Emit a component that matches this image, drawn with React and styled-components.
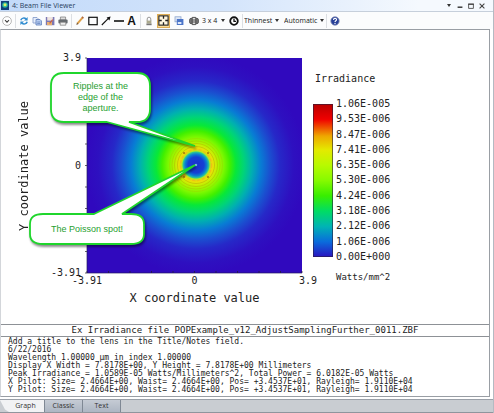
import React, { useState } from 'react';
import styled, { createGlobalStyle } from 'styled-components';

const GlobalStyle = createGlobalStyle`
  * {
    box-sizing: border-box;
  }
  body {
    margin: 0;
    background-color: #fff;
    font-family: 'Open Sans', 'Noto Sans', sans-serif;
    font-size: 7px;
    color: #222;
  }
  button, select {
    font: inherit;
    color: inherit;
    border: 0;
    padding: 0;
    background: none;
  }
`;

const mono = "'DejaVu Sans Mono', 'Liberation Mono', monospace";

const WindowStyles = styled.div`
  display: flex;
  flex-direction: column;
  min-height: 100vh;
  border-right: 1px solid #b4bac2;
`;

const TitleBar = styled.header`
  display: flex;
  align-items: center;
  height: 12px;
  padding: 0 6px 0 1px;
  gap: 3px;
  background: linear-gradient(to right, #c2dafa 0%, #d3e4fb 45%, #f5f9fe 85%);
  border-bottom: 1px solid #c6cfdb;
  h1 {
    flex: 1;
    margin: 0;
    font-size: 7px;
    line-height: 10px;
    font-weight: 400;
    color: #27405c;
  }
`;

const WindowButtons = styled.div`
  display: flex;
  button {
    display: flex;
    align-items: center;
    justify-content: center;
    width: 11px;
    height: 10px;
  }
`;

const Toolbar = styled.div`
  display: flex;
  align-items: center;
  height: 17px;
  background-color: #fbfcfd;
`;

const ToolGroup = styled.div`
  display: flex;
  align-items: center;
  gap: ${(props) => props.$gap || 0}px;
`;

const Separator = styled.span`
  width: 1px;
  height: 14px;
  margin: 0 1px 0 2px;
  background-color: #dcdfe3;
`;

const ToolButton = styled.button`
  display: flex;
  align-items: center;
  justify-content: center;
  width: 13px;
  height: 14px;
  background-color: ${(props) => (props.$active ? '#fbdc98' : 'transparent')};
  box-shadow: ${(props) => (props.$active ? 'inset 0 0 0 1px #dfae56' : 'none')};
`;

const TextTool = styled(ToolButton)`
  font-family: 'Liberation Sans', Arial, sans-serif;
  font-size: 12px;
  line-height: 14px;
  font-weight: 700;
  color: #111;
`;

const PickerStyles = styled.label`
  display: flex;
  align-items: center;
  width: ${(props) => props.$width}px;
  select {
    appearance: none;
    flex: 1;
    min-width: 0;
    line-height: 12px;
    outline: none;
  }
`;

const Canvas = styled.main`
  flex: 1;
  display: flex;
  flex-direction: column;
  margin-right: 3px;
  background-color: #fff;
  border: 1px solid #999ea4;
  border-left-color: #d3d6da;
`;

const Chart = styled.section`
  flex: 1;
  display: grid;
  grid-template-columns: 14px 56px minmax(0, 215px) auto;
  grid-template-rows: auto 16px 18px;
  align-content: start;
  justify-content: start;
  padding: 28px 16px 15px;
  font-family: ${mono};
  font-size: 10px;
  line-height: 12px;
`;

const YLabel = styled.div`
  writing-mode: vertical-rl;
  transform: rotate(180deg);
  text-align: center;
  font-size: 12px;
  line-height: 14px;
`;

const YTicks = styled.div`
  display: flex;
  flex-direction: column;
  justify-content: space-between;
  margin: -6px 0;
  padding-right: 6px;
  text-align: right;
`;

const XTicks = styled.div`
  grid-column: 3;
  display: grid;
  grid-template-columns: 1fr 1fr 1fr;
  margin: 0 -15px;
  line-height: 16px;
  text-align: center;
  span:first-child {
    text-align: left;
  }
  span:last-child {
    text-align: right;
  }
`;

const XLabel = styled.div`
  grid-column: 3;
  font-size: 12px;
  line-height: 18px;
  text-align: center;
  white-space: nowrap;
`;

const MapBox = styled.div`
  position: relative;
  aspect-ratio: 1;
  > svg {
    display: block;
    width: 100%;
    height: 100%;
    overflow: visible;
  }
`;

const CalloutStyles = styled.div`
  position: absolute;
  left: ${(props) => props.$left}px;
  top: ${(props) => props.$top}px;
  width: ${(props) => props.$width}px;
  height: ${(props) => props.$height}px;
  display: flex;
  align-items: center;
  justify-content: center;
  svg {
    position: absolute;
    left: 0;
    top: 0;
    width: 100%;
    height: 100%;
    overflow: visible;
    filter: drop-shadow(1px 2px 1px rgba(0, 0, 0, 0.45));
  }
  p {
    position: relative;
    margin: 0;
    font-family: 'Liberation Sans', Arial, sans-serif;
    font-size: 9px;
    line-height: 11px;
    text-align: center;
    color: #27a030;
  }
`;

const Legend = styled.div`
  grid-column: 4;
  grid-row: 1 / 4;
  margin-left: 11px;
  padding-top: 15px;
  h2 {
    margin: 0 0 13px 2px;
    font-size: 10px;
    line-height: 12px;
    font-weight: 400;
  }
  p {
    margin: 8px 0 0 23px;
    font-size: 9px;
    line-height: 12px;
  }
`;

const Scale = styled.div`
  display: flex;
  align-items: stretch;
  gap: 3px;
  height: 165px;
`;

const ColorBar = styled.div`
  width: 20px;
  margin: 6px 0;
  border: 1px solid rgba(40, 30, 60, 0.6);
  background: linear-gradient(
      to top,
      #2a14c0 0%,
      #0a6cdc 10%,
      #00b4b4 20%,
      #00dc64 30%,
      #38ee00 40%,
      #86fa00 50%,
      #b8fa00 60%,
      #e4ea00 70%,
      #eea800 79%,
      #f00000 90%,
      #b80000 100%
    )
    border-box;
`;

const ScaleLabels = styled.ul`
  display: flex;
  flex-direction: column;
  justify-content: space-between;
  margin: 0;
  padding: 0;
  list-style: none;
`;

const Caption = styled.div`
  border: solid #8d9196;
  border-width: 1px 0;
  font-family: ${mono};
  font-size: 9px;
  line-height: 11px;
  text-align: center;
`;

const Notes = styled.div`
  padding: 1px 7px 2px;
  font-family: ${mono};
  font-size: 8px;
  line-height: 8px;
  white-space: nowrap;
  p {
    margin: 0;
  }
`;

const TabBar = styled.div`
  display: flex;
  height: 14px;
  margin-top: 2px;
  background-color: #c9cdd2;
  border-top: 1px solid #9aa0a8;
  border-bottom: 1px solid #8f959d;
`;

const Tab = styled.button`
  width: 38px;
  color: #333;
  line-height: 12px;
  background: linear-gradient(#c5cbd4, #adb6c3);
  border-right: 1px solid #7f8894;
  &[aria-selected='true'] {
    width: 45px;
    padding-left: 7px;
    background: #f1f2f4;
    clip-path: polygon(0 0, 100% 0, 100% 100%, 9px 100%, 5px 80%);
  }
`;

const scaleValues = [
  '1.06E-005',
  '9.53E-006',
  '8.47E-006',
  '7.41E-006',
  '6.35E-006',
  '5.30E-006',
  '4.24E-006',
  '3.18E-006',
  '2.12E-006',
  '1.06E-006',
  '0.00E+000',
];

const notes = [
  'Add a title to the lens in the Title/Notes field.',
  '6/22/2016',
  'Wavelength 1.00000 µm in index 1.00000',
  'Display X Width = 7.8178E+00, Y Height = 7.8178E+00 Millimeters',
  'Peak Irradiance = 1.0589E-05 Watts/Millimeters^2, Total Power = 6.0182E-05 Watts',
  'X Pilot: Size= 2.4664E+00, Waist= 2.4664E+00, Pos= +3.4537E+01, Rayleigh= 1.9110E+04',
  'Y Pilot: Size= 2.4664E+00, Waist= 2.4664E+00, Pos= +3.4537E+01, Rayleigh= 1.9110E+04',
];

// radius in plot pixels, colour
const beamStops = [
  [0, '#2f6fe0'],
  [2, '#1a34cc'],
  [8, '#1440d4'],
  [11, '#0a84d0'],
  [13, '#30c890'],
  [14, '#b4e820'],
  [16, '#f0d808'],
  [18, '#e0e808'],
  [22, '#b0f400'],
  [28, '#7cf800'],
  [34, '#40f000'],
  [40, '#08e838'],
  [48, '#00d478'],
  [56, '#00b0b0'],
  [65, '#087cd4'],
  [74, '#1a50d0'],
  [84, '#2628c8'],
  [98, '#2e10c0'],
  [110, '#3009be'],
];

const Icon = ({ children, size = 10 }) => (
  <svg width={size} height={size} viewBox="0 0 10 10" fill="none" aria-hidden="true">
    {children}
  </svg>
);

const MoreIcon = () => (
  <Icon>
    <circle cx="5" cy="5" r="4.4" fill="#fff" stroke="#999" strokeWidth=".7" />
    <path d="M3 4.2l2 2 2-2" stroke="#444" strokeWidth="1.1" />
  </Icon>
);

const RefreshIcon = () => (
  <Icon>
    <path d="M1.8 4.2C2.4 2 5.6 1.3 7 3" stroke="#2f8bd0" strokeWidth="1.5" />
    <path d="M8.6 1v3.6H5z" fill="#2f8bd0" />
    <path d="M8.2 5.8C7.6 8 4.4 8.7 3 7" stroke="#2f8bd0" strokeWidth="1.5" />
    <path d="M1.4 9V5.4H5z" fill="#2f8bd0" />
  </Icon>
);

const CopyIcon = () => (
  <Icon>
    <path d="M1 1.5h4l1 1V7H1z" fill="#e6eefb" stroke="#8098c8" strokeWidth=".8" />
    <path d="M4 3.5h4l1.4 1.4V9H4z" fill="#bcd0f2" stroke="#5878b8" strokeWidth=".8" />
    <path d="M5.2 6h3M5.2 7.5h3" stroke="#5878b8" strokeWidth=".7" />
  </Icon>
);

const SaveIcon = () => (
  <Icon>
    <path d="M.8 1h8.6v8.2H.8z" fill="#7c78b4" />
    <path d="M2.2 1h5.6v3.6H2.2z" fill="#eee4e0" />
    <path d="M2 6h5v3.2H2z" fill="#e8b070" />
    <path d="M7.8 3.6L4.6 7.4" stroke="#c86048" strokeWidth="1.2" />
  </Icon>
);

const PrintIcon = () => (
  <Icon>
    <path d="M2.4 1h5.2v3H2.4z" fill="#ddd" stroke="#777" strokeWidth=".7" />
    <rect x=".4" y="3.4" width="9.2" height="4" rx="1" fill="#666b70" />
    <path d="M2.2 6.2h5.6v3H2.2z" fill="#eee" stroke="#777" strokeWidth=".7" />
  </Icon>
);

const PencilIcon = () => (
  <Icon>
    <path d="M2.6 7.4L7.6 1.6" stroke="#dfa048" strokeWidth="2" />
    <path d="M1.4 9l.5-2.4 1.6 1.3z" fill="#6b4a28" />
    <path d="M7.2 2l1-1.1" stroke="#b06a40" strokeWidth="2" />
  </Icon>
);

const SquareIcon = () => (
  <Icon>
    <rect x=".8" y="1.3" width="8.4" height="7.4" stroke="#111" strokeWidth="1.2" />
  </Icon>
);

const ArrowIcon = () => (
  <Icon>
    <path d="M.8 9L7.4 2.4" stroke="#111" strokeWidth="1.1" />
    <path d="M9.6.4L8.4 4.4 5.6 1.6z" fill="#111" />
  </Icon>
);

const LineIcon = () => (
  <Icon>
    <path d="M0 5h10" stroke="#111" strokeWidth="1.6" />
  </Icon>
);

const LockIcon = () => (
  <Icon>
    <path d="M3.2 5V3a1.8 1.8 0 013.6 0v2" stroke="#999" strokeWidth="1" />
    <rect x="2.6" y="4.6" width="4.8" height="3" fill="#aaa98e" />
    <rect x="2.4" y="7.6" width="5.2" height="1.6" fill="#777" />
  </Icon>
);

const FitIcon = () => (
  <Icon size={11}>
    <rect x=".8" y=".8" width="8.4" height="8.4" fill="#fff6df" stroke="#222" strokeWidth="1" />
    <path d="M5 .8v2.6M5 9.2V6.6M.8 5h2.6M9.2 5H6.6" stroke="#222" strokeWidth="1.2" />
  </Icon>
);

const CascadeIcon = () => (
  <Icon>
    <rect x="1" y=".8" width="6" height="5" fill="#dfe8f6" stroke="#8ea6cc" strokeWidth=".8" />
    <rect x="2.8" y="3" width="6.6" height="6" fill="#4a74c8" />
    <rect x="3.8" y="6" width="3.6" height="2" fill="#dce8fc" />
  </Icon>
);

const StackIcon = () => (
  <Icon>
    <rect x=".6" y="2.4" width="8.8" height="5.2" rx="1.4" fill="#777" stroke="#444" strokeWidth=".8" />
    <path d="M3.2 1.4h3.6v7.2H3.2z" fill="#ddd" stroke="#444" strokeWidth=".9" />
    <path d="M3.2 4h3.6M3.2 6h3.6" stroke="#444" strokeWidth=".9" />
  </Icon>
);

const ClockIcon = () => (
  <Icon>
    <circle cx="5" cy="5" r="3.8" fill="#fff" stroke="#111" strokeWidth="1.8" />
    <path d="M5 2.6v2.8h2" stroke="#111" strokeWidth="1.3" />
  </Icon>
);

const HelpIcon = () => (
  <Icon>
    <circle cx="5" cy="5" r="4.2" fill="#263f98" stroke="#8791b8" strokeWidth=".8" />
    <path d="M3.5 3.9c0-2 3.1-2 3.1-.2C6.6 4.8 5 4.8 5 6" stroke="#fff" strokeWidth="1.1" />
    <circle cx="5" cy="7.5" r=".7" fill="#fff" />
  </Icon>
);

const Caret = () => (
  <svg width="4" height="3" viewBox="0 0 4 3" aria-hidden="true">
    <path d="M0 0h4L2 3z" fill="#333" />
  </svg>
);

const AppIcon = () => (
  <svg width="8" height="9" viewBox="0 0 8 9" aria-hidden="true">
    <rect width="8" height="9" fill="#123f78" />
    <circle cx="4" cy="4" r="2.8" fill="#28b8a0" />
    <circle cx="4" cy="3.8" r="1.5" fill="#e0f060" />
  </svg>
);

function Picker({ label, width, options }) {
  return (
    <PickerStyles $width={width}>
      <select aria-label={label}>
        {options.map((option) => (
          <option key={option}>{option}</option>
        ))}
      </select>
      <Caret />
    </PickerStyles>
  );
}

function Callout({ left, top, width, height, path, children }) {
  return (
    <CalloutStyles $left={left} $top={top} $width={width} $height={height}>
      <svg viewBox={`0 0 ${width} ${height}`} aria-hidden="true">
        <path d={path} fill="#fff" stroke="#1fd62c" strokeWidth="1.8" strokeLinejoin="bevel" />
      </svg>
      <p>{children}</p>
    </CalloutStyles>
  );
}

function BeamMap() {
  const ticks = [0, 1, 2, 3, 4, 5, 6, 7, 8, 9, 10].map((i) => i * 21.5);
  return (
    <svg viewBox="0 0 215 215" role="img" aria-label="Beam irradiance">
      <defs>
        <radialGradient id="beam" gradientUnits="userSpaceOnUse" cx="109" cy="107" r="110">
          {beamStops.map(([radius, color]) => (
            <stop key={radius} offset={radius / 110} stopColor={color} />
          ))}
        </radialGradient>
      </defs>
      <rect width="215" height="215" fill="url(#beam)" />
      <g fill="none" stroke="#b09c00" strokeWidth=".8">
        <circle cx="109" cy="107" r="18.5" opacity=".55" />
        <circle cx="109" cy="107" r="21.5" opacity=".45" />
        <circle cx="109" cy="107" r="24" opacity=".35" />
        <circle cx="109" cy="107" r="26.5" opacity=".2" />
      </g>
      <circle cx="109" cy="107" r="15.5" fill="none" stroke="#f0b020" strokeWidth="1.4" strokeDasharray="3 2" opacity=".6" />
      <g fill="#6a3010">
        <circle cx="97" cy="95" r=".8" />
        <circle cx="121" cy="95" r=".8" />
        <circle cx="97" cy="119" r=".8" />
        <circle cx="121" cy="119" r=".8" />
      </g>
      <circle cx="109" cy="107" r=".9" fill="#9fe8e0" />
      <path
        d={ticks.map((t) => `M-2 ${t}h2M${t} 213v2`).join('')}
        stroke="#222"
        strokeWidth=".7"
      />
      <path d="M0 0v215h215" fill="none" stroke="#221a60" strokeWidth=".7" />
    </svg>
  );
}

export default function App() {
  const [tab, setTab] = useState('Graph');

  return (
    <>
      <GlobalStyle />
      <WindowStyles>
        <TitleBar>
          <AppIcon />
          <h1>4: Beam File Viewer</h1>
          <WindowButtons>
            <button aria-label="Menu">
              <Caret />
            </button>
            <button aria-label="Minimize">
              <Icon size={6}>
                <path d="M1 7h8" stroke="#333" strokeWidth="2.4" />
              </Icon>
            </button>
            <button aria-label="Maximize">
              <Icon size={6}>
                <path d="M1 2h8v7H1z" stroke="#444" strokeWidth="1.4" />
                <path d="M0 2h10" stroke="#444" strokeWidth="2" />
              </Icon>
            </button>
            <button aria-label="Close">
              <Icon size={6}>
                <path d="M1 1l8 8M9 1L1 9" stroke="#444" strokeWidth="1.8" />
              </Icon>
            </button>
          </WindowButtons>
        </TitleBar>

        <Toolbar>
          <ToolButton aria-label="Settings"><MoreIcon /></ToolButton>
          <Separator />
          <ToolGroup>
            <ToolButton aria-label="Refresh"><RefreshIcon /></ToolButton>
            <ToolButton aria-label="Copy"><CopyIcon /></ToolButton>
            <ToolButton aria-label="Save"><SaveIcon /></ToolButton>
            <ToolButton aria-label="Print"><PrintIcon /></ToolButton>
          </ToolGroup>
          <Separator />
          <ToolGroup>
            <ToolButton aria-label="Pencil"><PencilIcon /></ToolButton>
            <ToolButton aria-label="Rectangle"><SquareIcon /></ToolButton>
            <ToolButton aria-label="Arrow"><ArrowIcon /></ToolButton>
            <ToolButton aria-label="Line"><LineIcon /></ToolButton>
            <TextTool aria-label="Text">A</TextTool>
          </ToolGroup>
          <Separator />
          <ToolGroup $gap={2}>
            <ToolButton aria-label="Lock"><LockIcon /></ToolButton>
            <ToolButton aria-label="Fit" $active><FitIcon /></ToolButton>
            <ToolButton aria-label="Cascade"><CascadeIcon /></ToolButton>
            <ToolButton aria-label="Layers"><StackIcon /></ToolButton>
            <Picker label="Layout" width={23} options={['3 x 4', '4 x 3']} />
            <ToolButton aria-label="Reset"><ClockIcon /></ToolButton>
          </ToolGroup>
          <Separator />
          <ToolGroup $gap={5}>
            <Picker label="Line thickness" width={35} options={['Thinnest', 'Thick']} />
            <Picker label="Font size" width={40} options={['Automatic', 'Fixed']} />
          </ToolGroup>
          <Separator />
          <ToolButton aria-label="Help"><HelpIcon /></ToolButton>
        </Toolbar>

        <Canvas>
          <Chart>
            <YLabel>Y coordinate value</YLabel>
            <YTicks>
              <span>3.9</span>
              <span>0</span>
              <span>-3.91</span>
            </YTicks>
            <MapBox>
              <BeamMap />
              <Callout
                left={-36}
                top={15}
                width={99}
                height={49}
                path="M13 0H86Q99 0 99 13V36Q99 49 86 49H78L144 73L56 49H13Q0 49 0 36V13Q0 0 13 0Z"
              >
                Ripples at the
                <br />
                edge of the
                <br />
                aperture.
              </Callout>
              <Callout
                left={-57}
                top={156}
                width={114}
                height={30}
                path="M13 0H64L165 -49L92 0H101Q114 0 114 10V20Q114 30 101 30H13Q0 30 0 20V10Q0 0 13 0Z"
              >
                The Poisson spot!
              </Callout>
            </MapBox>
            <Legend>
              <h2>Irradiance</h2>
              <Scale>
                <ColorBar />
                <ScaleLabels>
                  {scaleValues.map((value) => (
                    <li key={value}>{value}</li>
                  ))}
                </ScaleLabels>
              </Scale>
              <p>Watts/mm^2</p>
            </Legend>
            <XTicks>
              <span>-3.91</span>
              <span>0</span>
              <span>3.9</span>
            </XTicks>
            <XLabel>X coordinate value</XLabel>
          </Chart>
          <Caption>Ex Irradiance file POPExample_v12_AdjustSamplingFurther_0011.ZBF</Caption>
          <Notes>
            {notes.map((line) => (
              <p key={line}>{line}</p>
            ))}
          </Notes>
        </Canvas>

        <TabBar role="tablist">
          {['Graph', 'Classic', 'Text'].map((name) => (
            <Tab
              key={name}
              role="tab"
              aria-selected={tab === name}
              onClick={() => setTab(name)}
            >
              {name}
            </Tab>
          ))}
        </TabBar>
      </WindowStyles>
    </>
  );
}
